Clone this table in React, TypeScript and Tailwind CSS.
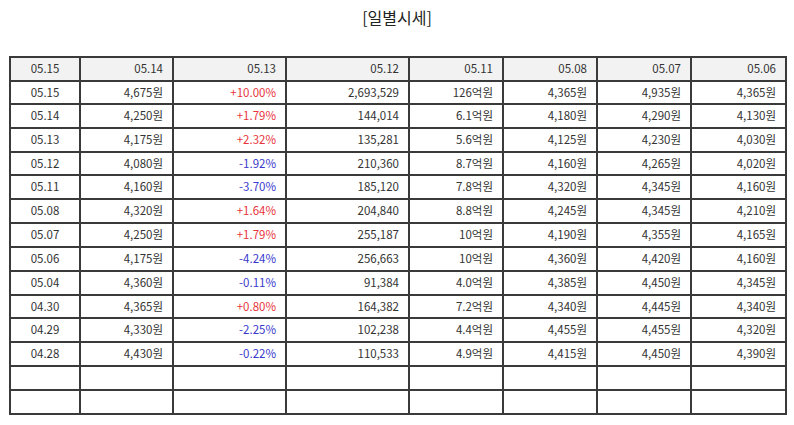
import React from "react";

const header = ["05.15", "05.14", "05.13", "05.12", "05.11", "05.08", "05.07", "05.06"];

const rows: string[][] = [
  ["05.15", "4,675원", "+10.00%", "2,693,529", "126억원", "4,365원", "4,935원", "4,365원"],
  ["05.14", "4,250원", "+1.79%", "144,014", "6.1억원", "4,180원", "4,290원", "4,130원"],
  ["05.13", "4,175원", "+2.32%", "135,281", "5.6억원", "4,125원", "4,230원", "4,030원"],
  ["05.12", "4,080원", "-1.92%", "210,360", "8.7억원", "4,160원", "4,265원", "4,020원"],
  ["05.11", "4,160원", "-3.70%", "185,120", "7.8억원", "4,320원", "4,345원", "4,160원"],
  ["05.08", "4,320원", "+1.64%", "204,840", "8.8억원", "4,245원", "4,345원", "4,210원"],
  ["05.07", "4,250원", "+1.79%", "255,187", "10억원", "4,190원", "4,355원", "4,165원"],
  ["05.06", "4,175원", "-4.24%", "256,663", "10억원", "4,360원", "4,420원", "4,160원"],
  ["05.04", "4,360원", "-0.11%", "91,384", "4.0억원", "4,385원", "4,450원", "4,345원"],
  ["04.30", "4,365원", "+0.80%", "164,382", "7.2억원", "4,340원", "4,445원", "4,340원"],
  ["04.29", "4,330원", "-2.25%", "102,238", "4.4억원", "4,455원", "4,455원", "4,320원"],
  ["04.28", "4,430원", "-0.22%", "110,533", "4.9억원", "4,415원", "4,450원", "4,390원"],
];

const widths = ["w-[70px]", "w-[93px]", "w-[113px]", "w-[123px]", "w-[94px]", "w-[94px]", "w-[94px]", "w-[95px]"];

const short = [1, 4, 10];

export default function App() {
  return (
    <div
      className="w-[794px] h-[425px] bg-white text-[#333]"
      style={{ fontFamily: '"Noto Sans CJK KR", "Noto Sans", sans-serif' }}
    >
      <div className="pt-[5px] h-[56px] text-center text-[16px] leading-[24px] text-[#222]">[일별시세]</div>
      <div className="px-[9px]">
        <table className="table-fixed border-collapse w-[778px] text-[11.5px]">
          <colgroup>
            {widths.map((w, i) => (
              <col key={i} className={w} />
            ))}
          </colgroup>
          <thead>
            <tr className="bg-[#f2f2f2]">
              {header.map((h, i) => (
                <td
                  key={i}
                  className={`h-[24px] p-0 border-2 border-[#3a3a3a] font-normal ${
                    i === 0 ? "text-center" : "text-right pr-[9px]"
                  }`}
                >
                  {h}
                </td>
              ))}
            </tr>
          </thead>
          <tbody>
            {rows.map((r, ri) => (
              <tr key={ri}>
                {r.map((c, ci) => {
                  let color = "";
                  if (ci === 2) color = c.startsWith("+") ? "text-[#e8343c]" : "text-[#3a3acc]";
                  return (
                    <td
                      key={ci}
                      className={`${short.includes(ri + 1) ? "h-[23px]" : "h-[24px]"} p-0 border-2 border-[#3a3a3a] ${
                        ci === 0 ? "text-center" : "text-right pr-[9px]"
                      } ${color}`}
                    >
                      {c}
                    </td>
                  );
                })}
              </tr>
            ))}
            {[0, 1].map((k) => (
              <tr key={`e${k}`}>
                {header.map((_, ci) => (
                  <td key={ci} className="h-[24px] p-0 border-2 border-[#3a3a3a]">
                    &nbsp;
                  </td>
                ))}
              </tr>
            ))}
          </tbody>
        </table>
      </div>
    </div>
  );
}
